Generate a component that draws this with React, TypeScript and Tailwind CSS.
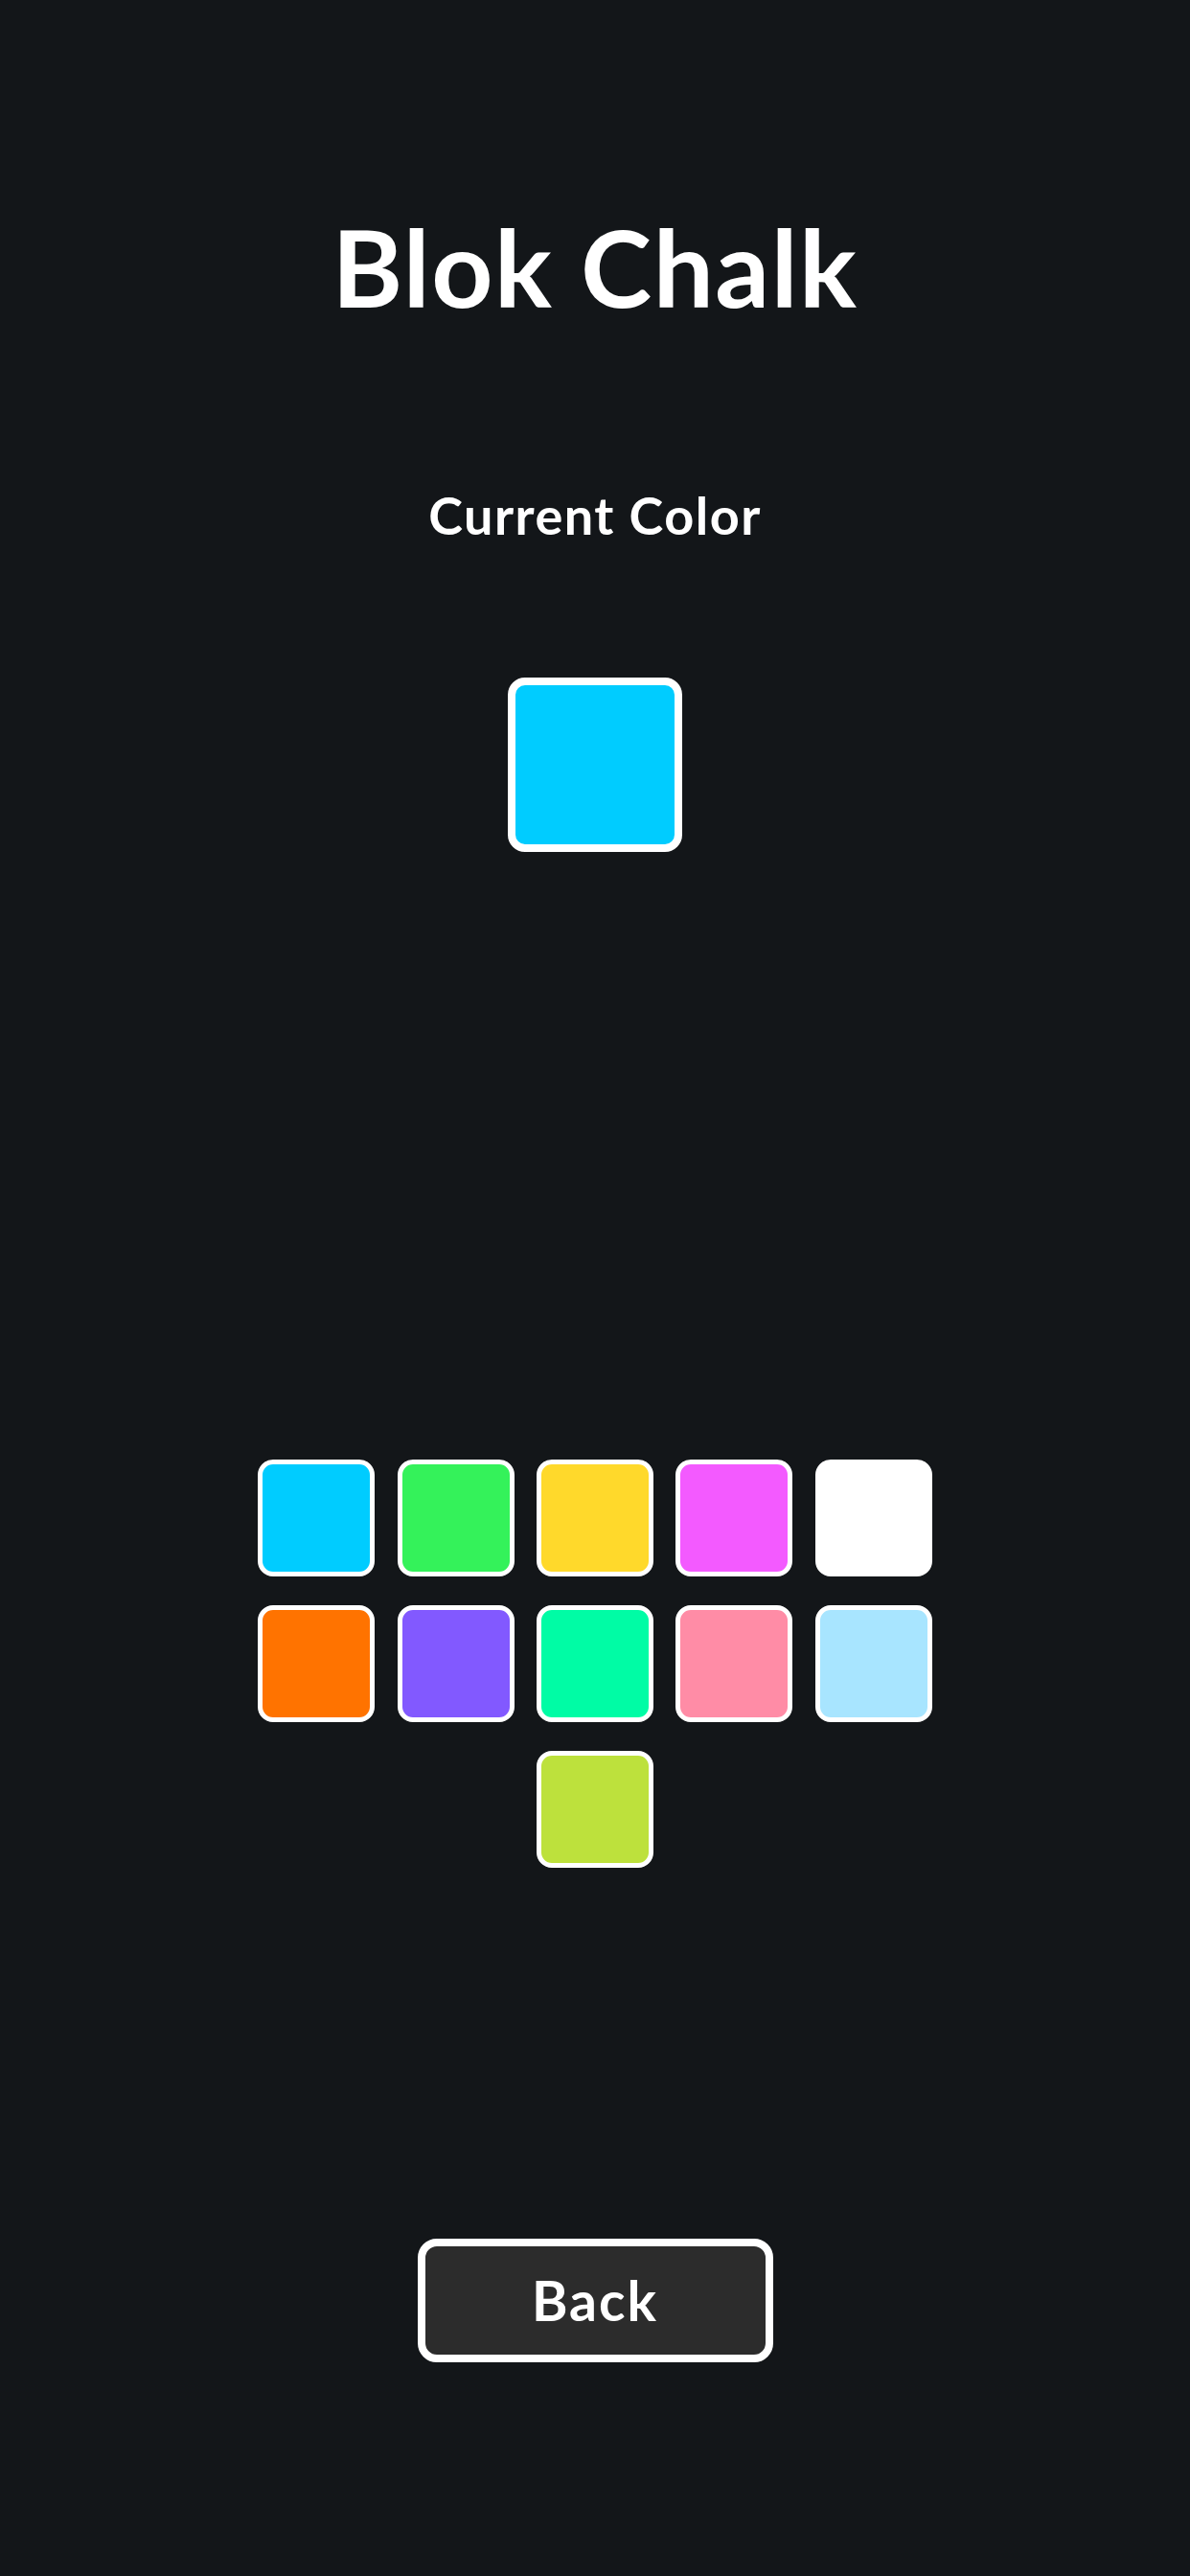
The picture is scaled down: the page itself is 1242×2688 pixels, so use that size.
import React from "react";

const colors = [
  "#00CCFF", "#34F25A", "#FFD92B", "#F35AFF", "#FFFFFF",
  "#FF7300", "#8259FF", "#00FCA5", "#FF8CA6", "#A8E5FF",
  "#BDE13C",
];

export default function App() {
  return (
    <div
      className="w-[1242px] h-[2688px] bg-[#131619] flex flex-col items-center text-white"
      style={{ fontFamily: "Lato, 'Open Sans', sans-serif" }}
    >
      <h1 className="mt-[222px] text-[112px] leading-[111px] font-bold tracking-[1.5px]">Blok Chalk</h1>
      <h2 className="mt-[178px] text-[54px] leading-[53px] font-bold tracking-[1.5px]">Current Color</h2>
      <div className="mt-[143px] w-[182px] h-[182px] rounded-[18px] border-[8px] border-white bg-[#00CCFF]" />
      <div className="mt-[634px] w-[704px] grid grid-cols-5 gap-x-[23px] gap-y-[30px] justify-items-center">
        {colors.slice(0, 10).map((c, i) => (
          <div
            key={i}
            className="w-[122px] h-[122px] rounded-[16px] border-[5px] border-white"
            style={{ backgroundColor: c }}
          />
        ))}
        <div className="col-start-3 w-[122px] h-[122px] rounded-[16px] border-[5px] border-white" style={{ backgroundColor: colors[10] }} />
      </div>
      <button className="mt-[387px] w-[371px] h-[129px] rounded-[20px] border-[8px] border-white bg-[#2C2C2C] text-[57px] font-bold tracking-[2px] text-white flex items-center justify-center">
        Back
      </button>
    </div>
  );
}
